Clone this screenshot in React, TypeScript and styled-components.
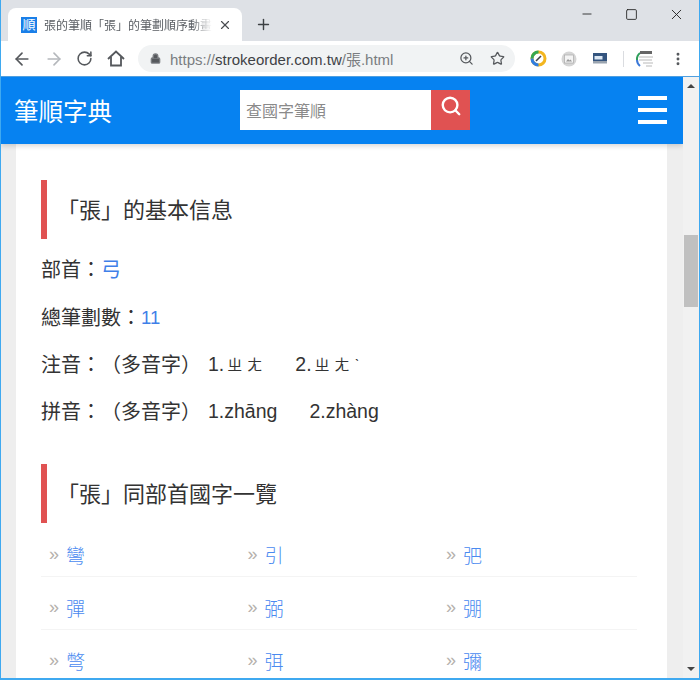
import React from "react";
import styled, { createGlobalStyle } from "styled-components";
import { ArrowLeft, ArrowRight, RotateCw, Lock, Plus, X, Minus, Square, ZoomIn, Star, MoreVertical, Search } from "lucide-react";

const Global = createGlobalStyle`
  html, body { margin: 0; padding: 0; background: #fff; }
  * { box-sizing: border-box; }
`;
const FONT = `"Liberation Sans", Arial, "Noto Sans CJK TC", sans-serif`;

const Frame = styled.div`
  width: 700px; height: 680px; overflow: hidden;
  display: flex; flex-direction: column;
  border: 1px solid #3fa9f0; border-top: 0; border-bottom-width: 2px;
  font-family: ${FONT}; color: #333; text-spacing-trim: space-all;
`;
const TabStrip = styled.div`
  height: 41px; flex: none; background: #dee1e6;
  display: flex; align-items: flex-end; padding-left: 7px;
`;
const Tab = styled.div`
  width: 234px; height: 33px; background: #fff; border-radius: 8px 8px 0 0;
  display: flex; align-items: center; padding: 0 10px 0 13px; color: #5f6368;
`;
const Favicon = styled.span`
  width: 16px; height: 16px; flex: none; background: #1a7fe8; color: #fff;
  font-size: 13px; line-height: 16px; text-align: center; overflow: hidden;
`;
const TabTitle = styled.span`
  flex: 1; margin-left: 7px; font-size: 12px; white-space: nowrap; overflow: hidden; color: #5a5e63;
  -webkit-mask-image: linear-gradient(90deg, #000 88%, transparent);
  mask-image: linear-gradient(90deg, #000 88%, transparent);
`;
const TabClose = styled.span`
  display: flex; margin-left: 6px; color: #4a4d51;
`;
const NewTab = styled.span`
  display: flex; margin: 0 0 8px 13px; color: #3c4043;
`;
const WindowControls = styled.div`
  margin-left: auto; align-self: flex-start; display: flex; align-items: center; height: 28px; color: #222;
`;
const WinButton = styled.span`
  width: 45px; display: flex; justify-content: center;
`;
const Toolbar = styled.div`
  height: 35px; flex: none; background: #fff; display: flex; align-items: center; color: #55585c;
`;
const NavIcon = styled.span<{ $w: number; $faded?: boolean }>`
  width: ${p => p.$w}px; display: flex; justify-content: center; color: ${p => (p.$faded ? "#b5b8bc" : "#55585c")};
`;
const NavGroup = styled.div`
  display: flex; align-items: center; padding-left: 5px; width: 137px;
`;
const Omnibox = styled.div`
  width: 377px; height: 27px; border-radius: 14px; background: #f1f3f4;
  display: flex; align-items: center; padding: 0 10px 0 12px; font-size: 15px; color: #7a7d81;
`;
const Url = styled.span`
  margin-left: 9px; flex: 1; white-space: nowrap;
`;
const UrlHost = styled.span`
  color: #3f4246;
`;
const OmniIcon = styled.span<{ $gap: number }>`
  display: flex; margin-left: ${p => p.$gap}px; color: #55585c;
`;
const Extensions = styled.div`
  flex: 1; display: flex; align-items: center; padding-left: 13px;
`;
const ExtSlot = styled.span<{ $w: number }>`
  width: ${p => p.$w}px; display: flex; justify-content: center; align-items: center; color: #55585c;
`;
const Divider = styled.span`
  width: 1px; height: 16px; background: #dadce0; margin: 0 9px 0 13px;
`;
const Viewport = styled.div`
  flex: 1; min-height: 0; display: flex; border-top: 1px solid #4f9fe0;
`;
const Page = styled.div`
  flex: 1; min-width: 0; display: flex; flex-direction: column; background: #eee; overflow: hidden;
`;
const Header = styled.header`
  height: 67px; flex: none; background: #0682f1; display: flex; align-items: center;
  padding: 0 16px 0 13px; box-shadow: 0 2px 5px rgba(0, 0, 0, 0.16); position: relative; z-index: 1;
`;
const Logo = styled.div`
  width: 226px; color: #fff; font-size: 24.5px; white-space: nowrap; font-family: "Noto Sans CJK TC", sans-serif;
  margin-top: -1px;
`;
const SearchBox = styled.div`
  display: flex; height: 40px; margin-top: -1px;
`;
const SearchInput = styled.div`
  width: 191px; background: #fff; color: #8a8a8a; font-size: 16px; padding-left: 6px;
  display: flex; align-items: center; font-family: "Noto Sans CJK TC", sans-serif;
`;
const SearchButton = styled.div`
  width: 39px; background: #e05252; color: #fff; display: flex; justify-content: center; padding-top: 5px;
`;
const Burger = styled.div`
  margin-left: auto; width: 29px; display: flex; flex-direction: column; gap: 8px; margin-top: -1px;
`;
const BurgerBar = styled.span`
  height: 4px; background: #fff;
`;
const Body = styled.div`
  flex: 1; padding: 0 16px 0 15px; min-height: 0;
`;
const Card = styled.main`
  height: 100%; background: #fff; padding: 36px 31px 0 25px; overflow: hidden;
`;
const SectionTitle = styled.h2<{ $mt?: number }>`
  margin: ${p => p.$mt ?? 0}px 0 0; height: 59px; border-left: 6px solid #e05252;
  padding-left: 10px; display: flex; align-items: center; padding-bottom: 3px;
  font-size: 22px; font-weight: 400; color: #333; font-family: "Noto Sans CJK TC", sans-serif;
`;
const Info = styled.p<{ $first?: boolean }>`
  margin: ${p => (p.$first ? 16 : 0)}px 0 0; height: 47px; font-size: 20px; line-height: 31px;
  white-space: nowrap; color: #333;
`;
const InfoLink = styled.span`
  color: #3f7fe8;
`;
const Latin = styled.span`
  font-size: 18.5px; vertical-align: 1px;
`;
const Reading = styled.span<{ $gap: number }>`
  margin-left: ${p => p.$gap}px; font-size: 19.5px; vertical-align: 1px;
`;
const Zhuyin = styled.span`
  font-size: 15px; letter-spacing: 5px; margin-left: 3px; vertical-align: 1px;
`;
const Grid = styled.div`
  margin-top: 1px; display: grid; grid-template-columns: repeat(3, 198.5px);
`;
const Cell = styled.div<{ $last?: boolean }>`
  height: 53px; padding: 8px 0 0 8px; display: flex; align-items: center;
  border-bottom: ${p => (p.$last ? "0" : "1px solid #f4f4f4")};
  font-size: 19px;
`;
const Chevron = styled.span`
  color: #b5b1ac; font-size: 18px; width: 17px; font-family: "Liberation Sans", sans-serif;
`;
const CharLink = styled.span`
  color: #4a8af0; font-family: "Noto Sans CJK TC", sans-serif; font-size: 19px; font-weight: 300;
`;
const Scrollbar = styled.div`
  width: 16px; flex: none; background: #f1f1f1; display: flex; flex-direction: column; align-items: center;
`;
const ArrowUp = styled.span`
  margin-top: 7px; border: 4px solid transparent; border-top: 0; border-bottom: 4px solid #444;
`;
const Thumb = styled.span`
  width: 14px; height: 72px; background: #c0c0c0; margin-top: 147px;
`;
const ArrowDown = styled.span`
  margin-top: auto; margin-bottom: 7px; border: 4px solid transparent; border-bottom: 0; border-top: 4px solid #444;
`;

const Chars = ["彎", "引", "弝", "彈", "弼", "弸", "彆", "弭", "彌"];

export default function App() {
  return (
    <Frame>
      <Global />
      <TabStrip>
        <Tab>
          <Favicon>順</Favicon>
          <TabTitle>張的筆順「張」的筆劃順序動畫演示</TabTitle>
          <TabClose><X size={14} strokeWidth={2} /></TabClose>
        </Tab>
        <NewTab><Plus size={17} strokeWidth={2} /></NewTab>
        <WindowControls>
          <WinButton><Minus size={14} strokeWidth={1.5} /></WinButton>
          <WinButton><Square size={13} strokeWidth={1.6} /></WinButton>
          <WinButton><X size={17} strokeWidth={1.3} /></WinButton>
        </WindowControls>
      </TabStrip>
      <Toolbar>
        <NavGroup>
          <NavIcon $w={32}><ArrowLeft size={20} strokeWidth={2} /></NavIcon>
          <NavIcon $w={31} $faded><ArrowRight size={20} strokeWidth={2} /></NavIcon>
          <NavIcon $w={31}><RotateCw size={17} strokeWidth={2.2} /></NavIcon>
          <NavIcon $w={31}>
            <svg width="18" height="17" viewBox="0 0 18 17" fill="none" stroke="currentColor" strokeWidth="1.8">
              <path d="M1 9l8-7.5L17 9" />
              <path d="M4 7v8.5h10V7" />
            </svg>
          </NavIcon>
        </NavGroup>
        <Omnibox>
          <Lock size={11} strokeWidth={3} fill="#55585c" />
          <Url>https://<UrlHost>strokeorder.com.tw</UrlHost>/張.html</Url>
          <OmniIcon $gap={0}><ZoomIn size={15} strokeWidth={2} /></OmniIcon>
          <OmniIcon $gap={16}><Star size={15} strokeWidth={2} /></OmniIcon>
        </Omnibox>
        <Extensions>
          <ExtSlot $w={20}>
            <svg width="17" height="17" viewBox="0 0 17 17">
              <circle cx="8.5" cy="8.5" r="6.5" fill="#fff" stroke="#f3b61f" strokeWidth="3" />
              <path d="M2 8.5A6.5 6.5 0 0 1 8.5 2" fill="none" stroke="#34a853" strokeWidth="3" />
              <path d="M2 8.5A6.5 6.5 0 0 0 8.5 15" fill="none" stroke="#2f7de1" strokeWidth="3" />
              <path d="M6 11l5-5" stroke="#444" strokeWidth="1.6" />
            </svg>
          </ExtSlot>
          <ExtSlot $w={42}>
            <svg width="16" height="16" viewBox="0 0 16 16">
              <circle cx="8" cy="8" r="7.5" fill="#d5d5d5" />
              <rect x="3.5" y="4" width="9" height="8" fill="#f4f4f4" stroke="#aaa" strokeWidth="0.7" />
              <path d="M5 10.5l2-2.5 1.5 1.5 1-1 1.5 2z" fill="#999" />
            </svg>
          </ExtSlot>
          <ExtSlot $w={20}>
            <svg width="14" height="11" viewBox="0 0 14 11">
              <rect width="14" height="8" fill="#34557f" />
              <rect x="1.5" y="3" width="8" height="3.5" fill="#dce8f4" />
              <rect x="0" y="8" width="14" height="2.5" fill="#9aa4b0" />
            </svg>
          </ExtSlot>
          <Divider />
          <ExtSlot $w={24}>
            <svg width="20" height="18" viewBox="0 0 20 18">
              <path d="M2 10A8 8 0 0 1 5 3" fill="none" stroke="#2f9e5b" strokeWidth="2" />
              <path d="M2 10a8 8 0 0 0 3 6" fill="none" stroke="#3a78d8" strokeWidth="2" />
              <rect x="5" y="1" width="12" height="3" fill="#666" />
              <path d="M4 7h14M4 10h13M8 13h10M11 16h6" stroke="#b9b9b9" strokeWidth="1" />
            </svg>
          </ExtSlot>
          <ExtSlot $w={42}><MoreVertical size={16} strokeWidth={2.4} /></ExtSlot>
        </Extensions>
      </Toolbar>
      <Viewport>
        <Page>
          <Header>
            <Logo>筆順字典</Logo>
            <SearchBox>
              <SearchInput>查國字筆順</SearchInput>
              <SearchButton>
                <Search size={22} strokeWidth={2.6} />
              </SearchButton>
            </SearchBox>
            <Burger>
              <BurgerBar />
              <BurgerBar />
              <BurgerBar />
            </Burger>
          </Header>
          <Body>
            <Card>
              <SectionTitle>「張」的基本信息</SectionTitle>
              <Info $first>部首：<InfoLink>弓</InfoLink></Info>
              <Info>總筆劃數：<InfoLink><Latin>11</Latin></InfoLink></Info>
              <Info>
                注音：（多音字）
                <Reading $gap={7}>1.<Zhuyin>ㄓㄤ</Zhuyin></Reading>
                <Reading $gap={28}>2.<Zhuyin>ㄓㄤˋ</Zhuyin></Reading>
              </Info>
              <Info>
                拼音：（多音字）
                <Reading $gap={7}>1.zhāng</Reading>
                <Reading $gap={32}>2.zhàng</Reading>
              </Info>
              <SectionTitle $mt={21}>「張」同部首國字一覽</SectionTitle>
              <Grid>
                {Chars.map((c, i) => (
                  <Cell key={c} $last={i >= 6}>
                    <Chevron>»</Chevron>
                    <CharLink>{c}</CharLink>
                  </Cell>
                ))}
              </Grid>
            </Card>
          </Body>
        </Page>
        <Scrollbar>
          <ArrowUp />
          <Thumb />
          <ArrowDown />
        </Scrollbar>
      </Viewport>
    </Frame>
  );
}
